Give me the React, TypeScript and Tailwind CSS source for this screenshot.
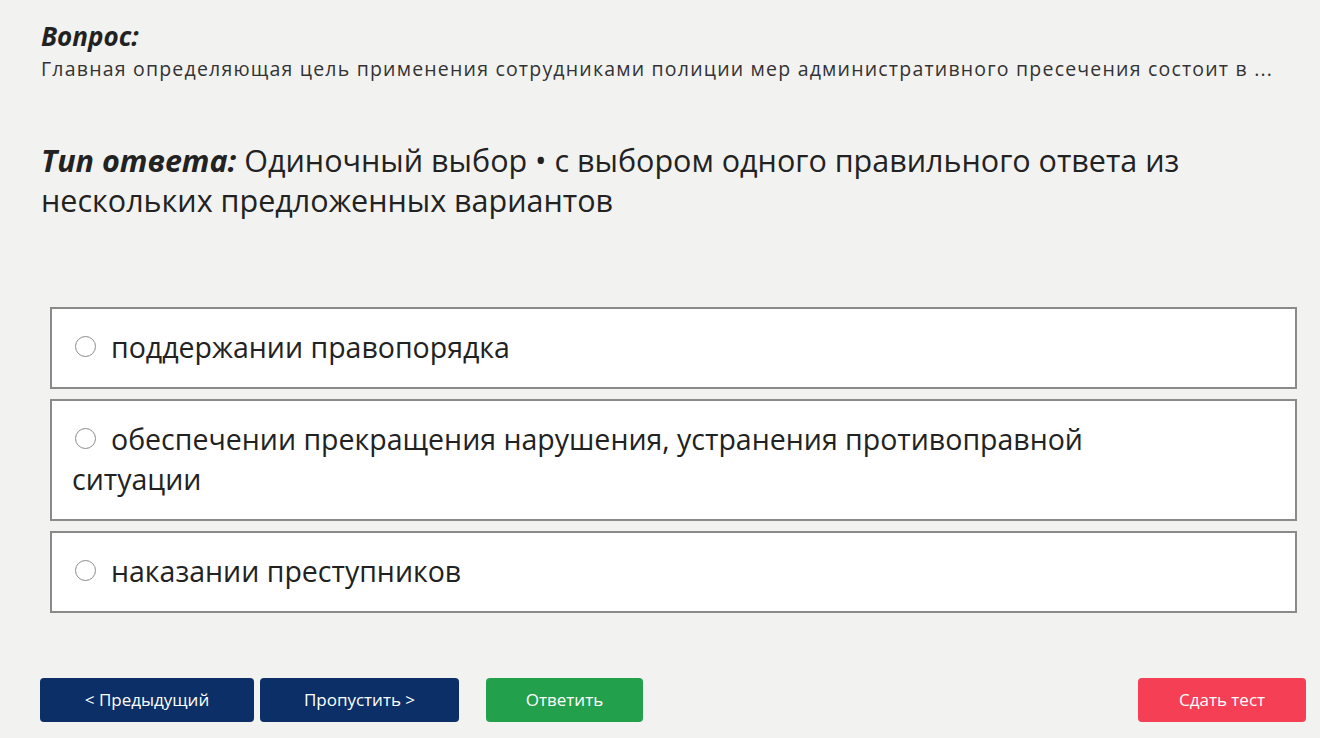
import React from "react";

const options = [
  "поддержании правопорядка",
  "обеспечении прекращения нарушения, устранения противоправной ситуации",
  "наказании преступников",
];

function OptionRow({ label }: { label: string }) {
  return (
    <label className="block border-2 border-[#8a8a8a] bg-white pl-[20px] pr-[110px] pt-[18px] pb-[20px] text-[28.5px] leading-[40px] text-[#222]">
      <span className="mr-[15px] ml-[3px] inline-block h-[21px] w-[21px] rounded-full border-[1.5px] border-[#8c8c8c] align-[1px]" />
      {label}
    </label>
  );
}

export default function App() {
  return (
    <div className="flex h-[738px] w-[1320px] flex-col bg-[#f2f2f1] font-['Open_Sans','Noto_Sans',sans-serif] text-[#222]">
      <div className="pl-[41px] pt-[17px]">
        <h2 className="text-[26px] font-bold italic leading-[38px]">Вопрос:</h2>
        <p className="text-[19.5px] leading-[28px] tracking-[1.2px] text-[#333]">
          Главная определяющая цель применения сотрудниками полиции мер административного пресечения состоит в ...
        </p>
      </div>

      <div className="pl-[41px] pr-10 pt-[57px] text-[30.5px] leading-[40px]">
        <span className="font-bold italic">Тип ответа:</span> Одиночный выбор • с выбором одного правильного ответа из нескольких предложенных вариантов
      </div>

      <div className="ml-[50px] mr-[23px] mt-[87px] flex flex-col gap-[10px]">
        {options.map((o, i) => (
          <OptionRow key={i} label={o} />
        ))}
      </div>

      <div className="mt-auto mb-[16px] flex items-center px-[40px] text-[17px] text-white">
        <button className="h-[44px] w-[214px] rounded-[4px] bg-[#0b2f66]">&lt; Предыдущий</button>
        <button className="ml-[6px] h-[44px] w-[199px] rounded-[4px] bg-[#0b2f66]">Пропустить &gt;</button>
        <button className="ml-[27px] h-[44px] w-[157px] rounded-[4px] bg-[#23a04b]">Ответить</button>
        <button className="ml-auto mr-[-26px] h-[44px] w-[168px] rounded-[4px] bg-[#f43f55]">Сдать тест</button>
      </div>
    </div>
  );
}
